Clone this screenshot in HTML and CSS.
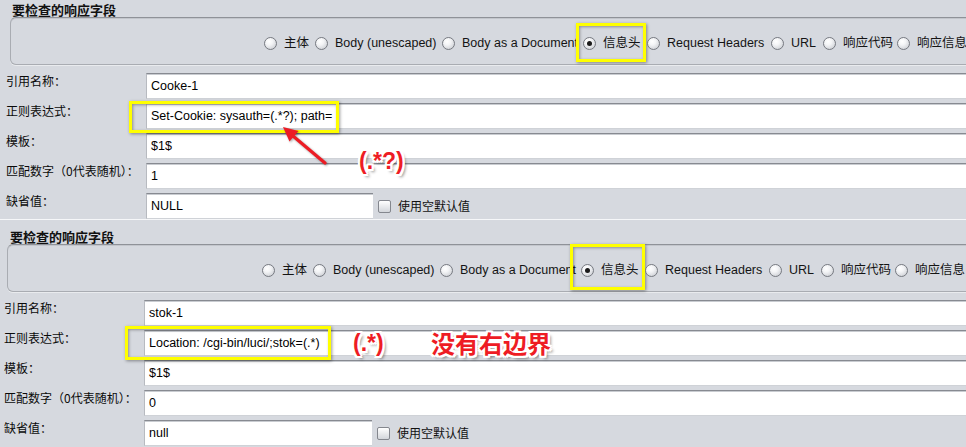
FILE: index.html
```html
<!DOCTYPE html>
<html lang="zh-CN">
<head>
<meta charset="utf-8">
<title>Regex Extractor</title>
<link rel="stylesheet" href="styles.css">
</head>
<body>
<div class="page">
  <section class="sec sec1">
    <div class="title">要检查的响应字段</div>
    <div class="group">
      <div class="radios">
        <label class="opt"><span class="radio"></span>主体</label>
        <label class="opt"><span class="radio"></span>Body (unescaped)</label>
        <label class="opt"><span class="radio"></span>Body as a Document</label>
        <label class="opt mark"><span class="radio on"></span>信息头</label>
        <label class="opt"><span class="radio"></span>Request Headers</label>
        <label class="opt"><span class="radio"></span>URL</label>
        <label class="opt"><span class="radio"></span>响应代码</label>
        <label class="opt"><span class="radio"></span>响应信息</label>
      </div>
    </div>
    <div class="rows">
      <div class="lbl">引用名称：</div>
      <div class="field">Cooke-1</div>
      <div class="lbl">正则表达式：</div>
      <div class="field fmark">Set-Cookie: sysauth=(.*?); path=</div>
      <div class="lbl">模板：</div>
      <div class="field">$1$</div>
      <div class="lbl">匹配数字（0代表随机）：</div>
      <div class="field">1</div>
      <div class="lbl">缺省值：</div>
      <div class="defrow">
        <div class="field short">NULL</div>
        <span class="check"></span>
        <span class="cklbl">使用空默认值</span>
      </div>
    </div>
  </section>

  <section class="sec sec2">
    <div class="title">要检查的响应字段</div>
    <div class="group">
      <div class="radios">
        <label class="opt"><span class="radio"></span>主体</label>
        <label class="opt"><span class="radio"></span>Body (unescaped)</label>
        <label class="opt"><span class="radio"></span>Body as a Document</label>
        <label class="opt mark"><span class="radio on"></span>信息头</label>
        <label class="opt"><span class="radio"></span>Request Headers</label>
        <label class="opt"><span class="radio"></span>URL</label>
        <label class="opt"><span class="radio"></span>响应代码</label>
        <label class="opt"><span class="radio"></span>响应信息</label>
      </div>
    </div>
    <div class="rows">
      <div class="lbl">引用名称：</div>
      <div class="field">stok-1</div>
      <div class="lbl">正则表达式：</div>
      <div class="field fmark">Location: /cgi-bin/luci/;stok=(.*)</div>
      <div class="lbl">模板：</div>
      <div class="field">$1$</div>
      <div class="lbl">匹配数字（0代表随机）：</div>
      <div class="field">0</div>
      <div class="lbl">缺省值：</div>
      <div class="defrow">
        <div class="field short">null</div>
        <span class="check"></span>
        <span class="cklbl">使用空默认值</span>
      </div>
    </div>
  </section>

  <svg class="arrow" width="966" height="447" viewBox="0 0 966 447" aria-hidden="true">
    <line x1="325" y1="163" x2="293" y2="136" stroke="#ec1c24" stroke-width="3.2" stroke-linecap="round"/>
    <polygon points="283,127 298.5,131 289.5,141.5" fill="#ec1c24"/>
  </svg>
  <div class="anno a1">(.*?)</div>
  <div class="anno a2">(.*)</div>
  <div class="anno a3">没有右边界</div>
</div>
</body>
</html>
```

FILE: styles.css
```css
html, body {
  margin: 0;
  padding: 0;
  background: #d6d9df;
  overflow: hidden;
}

.page {
  position: relative;
  width: 1010px;
  height: 447px;
  font-family: "Liberation Sans", "Noto Sans CJK SC", sans-serif;
  font-size: 12.5px;
  color: #000;
}

.sec1 {
  padding-top: 2px;
}

.sec2 {
  border-top: 1px solid #f6f7f9;
  padding-top: 9px;
}

.title {
  font-family: "Noto Sans CJK SC", sans-serif;
  font-weight: bold;
  font-size: 13px;
  line-height: 15px;
  color: #111;
}

.sec1 .title { padding-left: 12px; }
.sec2 .title { padding-left: 10px; }

.group {
  box-sizing: border-box;
  height: 48px;
  border: 1px solid #a9acb2;
  border-top-color: #8f9298;
  border-radius: 6px;
  box-shadow: inset 0 1px 0 #c3c6cc, 0 1px 0 #e9ebee;
  padding-top: 4px;
  display: flex;
  align-items: center;
}

.sec1 .group { margin-left: 10px; }
.sec2 .group { margin-left: 7px; }

.radios {
  display: grid;
  grid-template-columns: 51px 127px 141px 64px 124px 52px 74px max-content;
  align-items: center;
}

.sec1 .radios { padding-left: 253px; }
.sec2 .radios { padding-left: 254px; }

.opt {
  display: flex;
  align-items: center;
  gap: 7px;
  height: 14px;
  line-height: 14px;
  white-space: nowrap;
  color: #141414;
}

.radio {
  flex: none;
  box-sizing: border-box;
  width: 13px;
  height: 13px;
  border-radius: 50%;
  border: 1px solid #777a81;
  background: radial-gradient(circle at 38% 32%, #ffffff 0, #f3f4f6 35%, #c2c5cb 100%);
  position: relative;
}

.radio.on::after {
  content: "";
  position: absolute;
  left: 3px;
  top: 3px;
  width: 5px;
  height: 5px;
  border-radius: 50%;
  background: #1a1a1a;
}

.mark {
  position: relative;
}

.mark::after {
  content: "";
  position: absolute;
  box-sizing: border-box;
  border: 3px solid #ffff00;
  box-shadow: 1px 1px 3px rgba(0, 0, 0, 0.4), inset 1px 1px 3px rgba(0, 0, 0, 0.35);
  pointer-events: none;
}

.sec1 .mark::after {
  left: -7px;
  top: -13px;
  width: 70px;
  height: 39px;
}

.sec2 .mark::after {
  left: -11px;
  top: -19px;
  width: 75px;
  height: 46px;
}

.rows {
  display: grid;
  grid-template-columns: 140px 1fr;
  grid-auto-rows: 26px;
  row-gap: 4px;
  margin-top: 8px;
}

.sec1 .rows { padding-left: 6px; }
.sec2 .rows { padding-left: 4px; }

.lbl {
  font-family: "Noto Sans CJK SC", sans-serif;
  font-size: 12px;
  line-height: 14px;
  padding-top: 1px;
  white-space: nowrap;
  color: #0a0a0a;
}

.field {
  box-sizing: border-box;
  height: 26px;
  background: #fff;
  border-top: 1px solid #878a91;
  border-left: 1px solid #b7bac0;
  border-bottom: 1px solid #cfd2d7;
  box-shadow: inset 0 1px 0 #c9ccd1;
  padding: 1px 4px 0;
  line-height: 23px;
  white-space: nowrap;
}

.fmark {
  position: relative;
}

.fmark::after {
  content: "";
  position: absolute;
  box-sizing: border-box;
  border: 3px solid #ffff00;
  box-shadow: 1px 1px 3px rgba(0, 0, 0, 0.4), inset 1px 1px 3px rgba(0, 0, 0, 0.35);
  pointer-events: none;
}

.sec1 .fmark::after {
  left: -18px;
  top: -3px;
  width: 210px;
  height: 32px;
}

.sec2 .fmark::after {
  left: -20px;
  top: -5px;
  width: 206px;
  height: 34px;
}

.defrow {
  display: flex;
  align-items: center;
}

.field.short {
  width: 227px;
}

.sec2 .field.short {
  width: 228px;
}

.check {
  flex: none;
  box-sizing: border-box;
  width: 13px;
  height: 13px;
  margin-left: 5px;
  border: 1px solid #84878e;
  border-radius: 2px;
  background: linear-gradient(#ffffff, #d3d6db);
}

.cklbl {
  margin-left: 7px;
  font-family: "Noto Sans CJK SC", sans-serif;
  font-size: 12px;
  line-height: 14px;
  color: #111;
}

.arrow {
  position: absolute;
  left: 0;
  top: 0;
  pointer-events: none;
  filter: drop-shadow(1px 1px 1px rgba(0, 0, 0, 0.35));
}

.anno {
  position: absolute;
  color: #ee1c24;
  font-weight: bold;
  white-space: nowrap;
  text-shadow:
    -2px -2px 0 #fff, 2px -2px 0 #fff, -2px 2px 0 #fff, 2px 2px 0 #fff,
    0 -2px 0 #fff, 0 2px 0 #fff, -2px 0 0 #fff, 2px 0 0 #fff,
    3px 3px 3px rgba(0, 0, 0, 0.45);
}

.a1 {
  left: 359px;
  top: 147px;
  font-size: 23px;
  line-height: 28px;
  font-family: "Liberation Sans", sans-serif;
}

.a2 {
  left: 353px;
  top: 329px;
  font-size: 23px;
  line-height: 28px;
  font-family: "Liberation Sans", sans-serif;
}

.a3 {
  left: 431px;
  top: 328px;
  font-size: 24px;
  line-height: 30px;
  font-family: "Noto Sans CJK SC", sans-serif;
}
```
